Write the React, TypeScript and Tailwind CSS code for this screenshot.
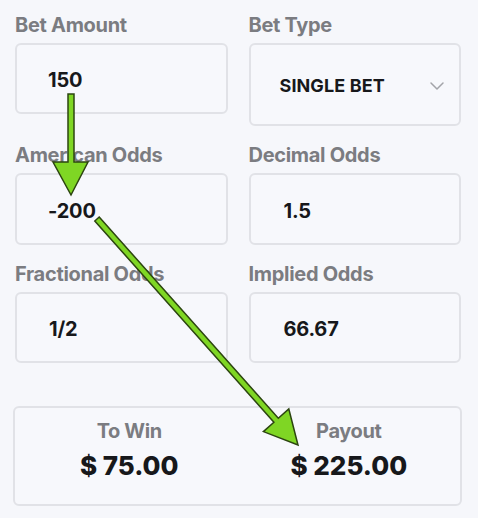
import { ChevronDown } from "lucide-react";

const font = { fontFamily: "Inter, 'Liberation Sans', sans-serif" };

function Label({ children }: { children: string }) {
  return <div className="text-[20px] leading-[24px] font-bold text-[#7b7c81] tracking-[-0.3px] mb-[6px]">{children}</div>;
}

function Field({ label, value, pad = "pl-[31px]", h = "h-[72px]" }: { label: string; value: string; pad?: string; h?: string }) {
  return (
    <div>
      <Label>{label}</Label>
      <div className={`${h} ${pad} pt-[3px] flex items-center rounded-[6px] border-2 border-[#e1e2e7] bg-[#f7f8fc] text-[20px] font-bold text-[#17181b] tracking-[-0.2px]`}>
        {value}
      </div>
    </div>
  );
}

export default function App() {
  return (
    <div style={font} className="relative w-[478px] h-[518px] bg-[#f6f7fb] pt-[13px] px-[13px] pr-[16px] overflow-hidden">
      <div className="grid grid-cols-2 gap-x-[21px] gap-y-[17px] items-start px-[2px] pr-[1px]">
        <Field label="Bet Amount" value="150" h="h-[71px]" />
        <div>
          <Label>Bet Type</Label>
          <div className="h-[83px] pl-[29px] pr-[10px] pt-[2px] flex items-center justify-between rounded-[6px] border-2 border-[#e1e2e7] bg-[#f7f8fc]">
            <span className="text-[18px] font-bold text-[#17181b] tracking-[0.1px]">SINGLE BET</span>
            <ChevronDown size={24} strokeWidth={1.5} className="text-[#a3a4a9]" />
          </div>
        </div>
        <Field label="American Odds" value="-200" />
        <Field label="Decimal Odds" value="1.5" pad="pl-[33px]" />
        <Field label="Fractional Odds" value="1/2" pad="pl-[32px]" h="h-[71px]" />
        <Field label="Implied Odds" value="66.67" pad="pl-[33px]" h="h-[71px]" />
      </div>

      <div className="mt-[43px] h-[100px] grid grid-cols-2 rounded-[6px] border-2 border-[#e1e2e7] bg-[#f7f8fc] text-center pt-[11px]">
        <div className="flex flex-col items-center pl-[6px]">
          <div className="text-[20px] leading-[24px] font-bold text-[#7b7c81] tracking-[-0.4px]">To Win</div>
          <div className="mt-[7px] text-[26px] leading-[32px] font-extrabold text-[#17181b]">$ 75.00</div>
        </div>
        <div className="flex flex-col items-center">
          <div className="text-[20px] leading-[24px] font-bold text-[#7b7c81] tracking-[-0.4px]">Payout</div>
          <div className="mt-[7px] text-[26px] leading-[32px] font-extrabold text-[#17181b]">$ 225.00</div>
        </div>
      </div>

      <svg className="absolute inset-0 pointer-events-none" width="478" height="518" viewBox="0 0 478 518">
        <path
          d="M68 94 L74 94 L74 162 L88 162 L71 195 L53 162 L68 162 Z"
          fill="#7fd624"
          stroke="#2c4510"
          strokeWidth="1.5"
        />
        <path
          d="M99.2 217 L278.3 418.3 L288.8 409 L298 445 L263.4 431.6 L273.9 422.3 L94.8 221 Z"
          fill="#7fd624"
          stroke="#2c4510"
          strokeWidth="1.5"
        />
      </svg>
    </div>
  );
}
